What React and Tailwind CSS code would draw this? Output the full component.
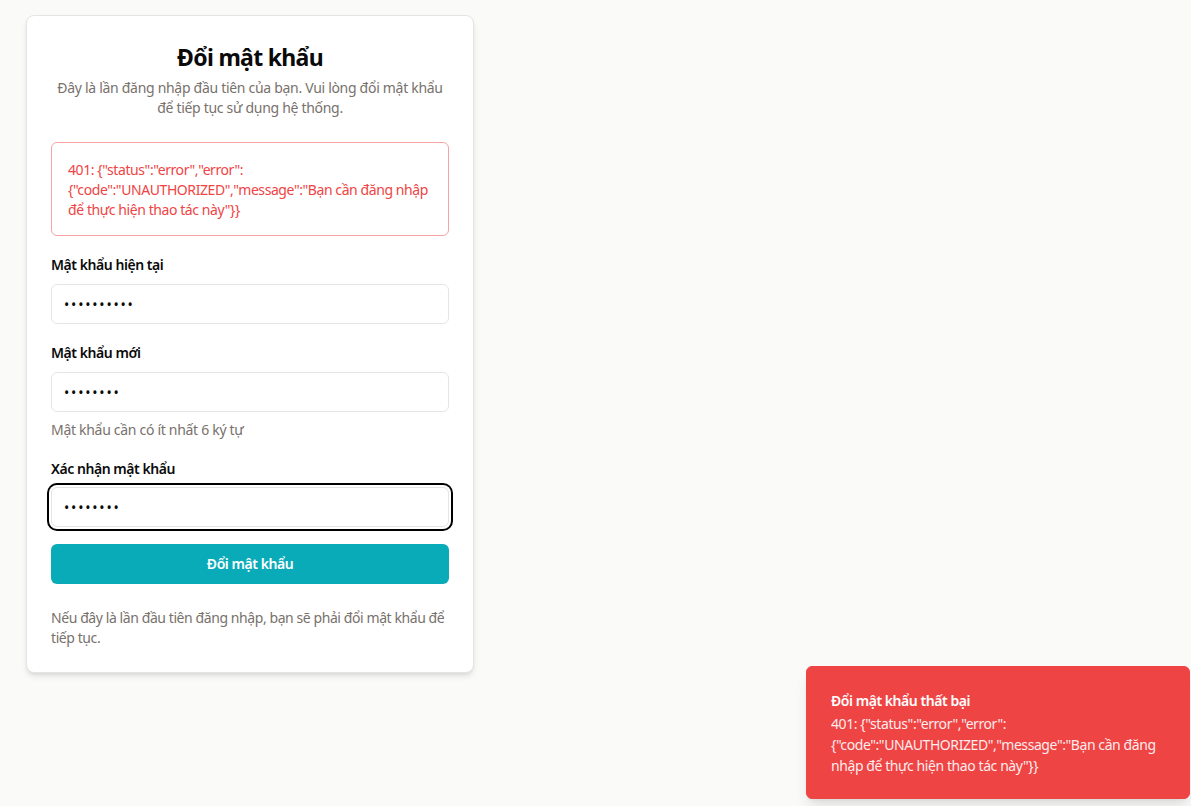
import React from "react";

const App = () => {
  const errorText =
    '401: {"status":"error","error":{"code":"UNAUTHORIZED","message":"Bạn cần đăng nhập để thực hiện thao tác này"}}';

  const inputCls =
    "block w-full h-10 px-3 rounded-md border border-[#e7e5e4] bg-white text-sm tracking-[1.8px] outline-none";

  return (
    <div
      className="relative w-[1191px] h-[806px] overflow-hidden bg-[#fafaf9] text-[#0a0a0a] tracking-[-0.3px]"
      style={{ fontFamily: '"Noto Sans", "Open Sans", sans-serif' }}
    >
      <div className="pl-[26px] pt-[15px]">
        <div className="w-[448px] bg-white border border-[#e7e5e4] rounded-lg shadow-md px-6 pt-[25px] pb-6">
          <h1 className="text-center text-[23px] font-bold leading-8 tracking-[-0.7px]">Đổi mật khẩu</h1>
          <p className="mt-[5px] text-center text-sm leading-5 text-[#78716c]">
            Đây là lần đăng nhập đầu tiên của bạn. Vui lòng đổi mật khẩu để tiếp tục sử dụng hệ thống.
          </p>

          <div className="mt-6 border border-[#f8a4a4] rounded-md p-4 pt-[17px] pb-[15px] text-sm leading-5 tracking-[-0.42px] text-[#ef4444] break-words">
            {errorText}
          </div>

          <form className="mt-[19px]" onSubmit={e => e.preventDefault()}>
            <label className="block text-sm leading-5 font-semibold tracking-[-0.45px]">Mật khẩu hiện tại</label>
            <input type="password" defaultValue="1234567890" className={`mt-[9px] ${inputCls}`} />

            <label className="mt-[19px] block text-sm leading-5 font-semibold tracking-[-0.45px]">Mật khẩu mới</label>
            <input type="password" defaultValue="12345678" className={`mt-[9px] ${inputCls}`} />
            <p className="mt-2 text-sm leading-5 text-[#78716c]">Mật khẩu cần có ít nhất 6 ký tự</p>

            <label className="mt-[19px] block text-sm leading-5 font-semibold tracking-[-0.45px]">Xác nhận mật khẩu</label>
            <input
              type="password"
              defaultValue="12345678"
              className={`mt-2 ${inputCls} ring-2 ring-black ring-offset-2 ring-offset-white`}
            />

            <button
              type="submit"
              className="mt-[17px] w-full h-10 rounded-md bg-[#0aabb8] text-white text-sm font-semibold tracking-[-0.45px]"
            >
              Đổi mật khẩu
            </button>
          </form>

          <p className="mt-6 text-sm leading-5 tracking-[-0.42px] text-[#78716c]">
            Nếu đây là lần đầu tiên đăng nhập, bạn sẽ phải đổi mật khẩu để tiếp tục.
          </p>
        </div>
      </div>

      {/* toast */}
      <div className="absolute left-[806px] top-[666px] w-[384px] rounded-md border border-[#ef4444] bg-[#ef4444] text-white shadow-lg p-6 pr-7 pb-[22px]">
        <div className="text-sm leading-5 font-semibold tracking-[-0.45px]">Đổi mật khẩu thất bại</div>
        <div className="mt-[2px] text-sm leading-[21px] tracking-[-0.42px] opacity-90 break-words">{errorText}</div>
      </div>
    </div>
  );
};

export default App;
